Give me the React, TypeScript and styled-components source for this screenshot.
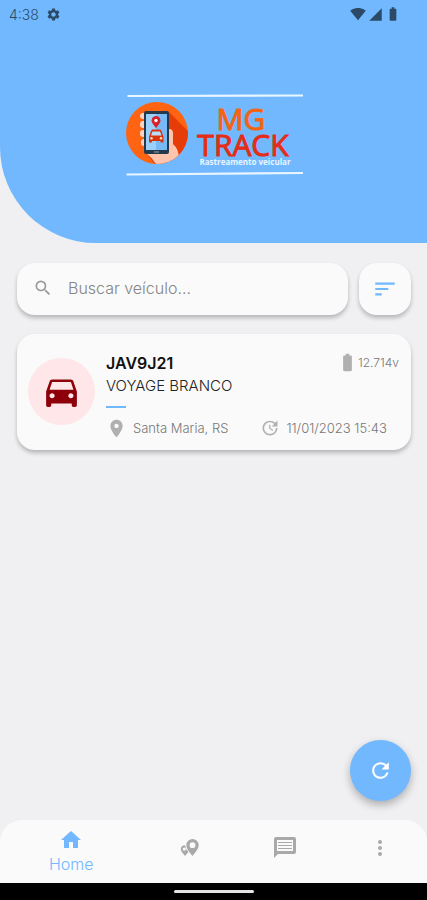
import React, { useState } from "react";
import styled, { createGlobalStyle } from "styled-components";
import {
  MdBatteryFull,
  MdDirectionsCar,
  MdHome,
  MdMoreVert,
  MdPlace,
  MdRefresh,
  MdSearch,
  MdSettings,
  MdSignalCellular4Bar,
  MdSignalWifi4Bar,
  MdSort,
  MdUpdate,
} from "react-icons/md";

const color = {
  primary: "#71b8ff",
  page: "#f0f0f3",
  surface: "#fafafa",
  icon: "#b0b0b0",
  status: "#2b4a68",
};

const GlobalStyle = createGlobalStyle`
  *, *::before, *::after { box-sizing: border-box; }
  body {
    margin: 0;
    background: ${color.page};
    font-family: Inter, "Open Sans", sans-serif;
  }
  button, input { font: inherit; }
`;

const Screen = styled.div`
  min-height: 100vh;
  display: flex;
  flex-direction: column;
`;

const Header = styled.header`
  height: 243px;
  background: ${color.primary};
  border-bottom-left-radius: 96px;
  display: flex;
  flex-direction: column;
`;

const StatusBar = styled.div`
  height: 28px;
  padding: 0 26px 0 9px;
  display: flex;
  align-items: center;
  justify-content: space-between;
  color: ${color.status};
  font-size: 14px;
  font-weight: 300;
`;

const StatusGroup = styled.div<{ $gap: number }>`
  display: flex;
  align-items: center;
  gap: ${(p) => p.$gap}px;
`;

const LogoArea = styled.div`
  padding-top: 64px;
  display: flex;
  justify-content: center;
`;

const Main = styled.main`
  flex: 1;
  display: flex;
  flex-direction: column;
  padding: 20px 16px 19px 17px;
`;

const SearchRow = styled.form`
  display: flex;
  gap: 11px;
`;

const raised = "0 3px 4px rgba(0, 0, 0, 0.24)";

const SearchField = styled.label`
  flex: 1;
  min-width: 0;
  height: 52px;
  padding: 0 16px 2px;
  display: flex;
  align-items: center;
  gap: 15px;
  border-radius: 18px;
  background: ${color.surface};
  box-shadow: ${raised};
  color: #9a9a9a;
  svg { flex: none; }
`;

const SearchInput = styled.input`
  flex: 1;
  min-width: 0;
  padding: 0;
  border: 0;
  outline: 0;
  background: transparent;
  color: #333;
  font-size: 16px;
  font-weight: 300;
  &::placeholder { color: #858585; opacity: 1; }
`;

const SortButton = styled.button`
  width: 52px;
  height: 52px;
  padding: 0;
  display: grid;
  place-items: center;
  border: 0;
  border-radius: 18px;
  background: ${color.surface};
  box-shadow: ${raised};
  color: ${color.primary};
`;

const Card = styled.article`
  margin-top: 19px;
  min-height: 116px;
  padding: 18px 12px 10px 11px;
  display: flex;
  gap: 11px;
  border-radius: 18px;
  background: ${color.surface};
  box-shadow: ${raised};
`;

const Avatar = styled.div`
  flex: none;
  width: 67px;
  height: 67px;
  margin-top: 6px;
  display: grid;
  place-items: center;
  border-radius: 50%;
  background: #ffe6e8;
  color: #8e0009;
`;

const CardBody = styled.div`
  flex: 1;
  min-width: 0;
`;

const TitleRow = styled.div`
  display: flex;
  align-items: center;
  justify-content: space-between;
`;

const Plate = styled.h2`
  margin: 0;
  font-size: 16px;
  line-height: 20px;
  font-weight: 600;
  color: #111;
`;

const Model = styled.p`
  margin: 3px 0 0;
  font-size: 15px;
  line-height: 20px;
  font-weight: 300;
  color: #222;
`;

const Accent = styled.div`
  width: 20px;
  height: 2px;
  margin-top: 10px;
  background: ${color.primary};
`;

const Voltage = styled.span`
  display: flex;
  align-items: center;
  font-size: 12px;
  font-weight: 300;
  color: #777;
  svg { color: ${color.icon}; }
`;

const MetaRow = styled.div`
  margin-top: 10px;
  display: flex;
  gap: 32px;
`;

const Meta = styled.span`
  display: flex;
  align-items: center;
  gap: 6px;
  height: 20px;
  font-size: 13px;
  font-weight: 300;
  white-space: nowrap;
  color: #777;
  svg { flex: none; color: ${color.icon}; }
`;

const RefreshButton = styled.button`
  width: 61px;
  height: 61px;
  margin-top: auto;
  align-self: flex-end;
  padding: 0;
  display: grid;
  place-items: center;
  border: 0;
  border-radius: 50%;
  background: ${color.primary};
  box-shadow: 0 4px 8px rgba(0, 0, 0, 0.28);
  color: #fff;
`;

const NavBar = styled.nav`
  height: 63px;
  display: grid;
  grid-template-columns: 3fr 2fr 2fr 2fr;
  border-radius: 22px 22px 0 0;
  background: ${color.surface};
`;

const NavItem = styled.button<{ $active?: boolean }>`
  padding: 0 0 ${(p) => (p.$active ? 2 : 8)}px;
  display: flex;
  flex-direction: column;
  align-items: center;
  justify-content: center;
  gap: 2px;
  border: 0;
  background: transparent;
  color: ${(p) => (p.$active ? color.primary : "#a9a9a9")};
  font-size: 16px;
  line-height: 20px;
  font-weight: 300;
`;

const GestureBar = styled.div`
  height: 17px;
  display: flex;
  justify-content: center;
  align-items: center;
  background: #000;
`;

const GesturePill = styled.div`
  width: 80px;
  height: 3px;
  border-radius: 2px;
  background: #e4e4e4;
`;

function Logo() {
  return (
    <svg width="180" height="86" viewBox="0 0 180 86" role="img" aria-label="MG Track, rastreamento veicular">
      <defs>
        <clipPath id="disc">
          <circle cx="33" cy="41" r="31" />
        </clipPath>
      </defs>
      <path d="M3.500 4L179 3.500" stroke="#e9f5ff" strokeWidth="2.200" />
      <path d="M2.500 82.500L179 81" stroke="#e9f5ff" strokeWidth="2.200" />
      <g clipPath="url(#disc)">
        <rect width="68" height="76" fill="#ff6412" />
        <path d="M45 20L68 43V76H34L22 61Z" fill="#e63c08" />
        <path d="M22 60H44V37Q50 36 49 44V52Q55 57 55 67V76H34Q30 67 22 61Z" fill="#ffc4ae" />
        <g fill="#ffd3c4">
          <rect x="16" y="21" width="9" height="6" rx="3" />
          <rect x="16" y="29" width="9" height="7" rx="3" />
          <rect x="16" y="38" width="9" height="7" rx="3" />
          <rect x="17" y="47" width="9" height="7" rx="3" />
        </g>
        <rect x="20" y="19" width="25" height="43" rx="2" fill="#26394b" />
        <rect x="22" y="22" width="21" height="36" fill="#78baf5" />
        <path d="M22 22H32V58H22Z" fill="#9bd0fa" />
        <path d="M30 60H35" stroke="#8ba5b8" />
        <path d="M32 35.500C29.500 32 28 30.500 28 28.500A4 4 0 0 1 36 28.500C36 30.500 34.500 32 32 35.500Z" fill="#d92027" stroke="#d92027" />
        <circle cx="32" cy="28.500" r="1.700" fill="#fff" />
        <path d="M25 45L27 39Q27.500 37.500 28.500 37.500H36Q37 37.500 37.500 39L39.500 45V50.500H36.500V49H28V50.500H25Z" fill="#d9340e" />
        <path d="M28.500 39.500H36L37.500 43.500H27Z" fill="#b9defa" />
        <circle cx="27.500" cy="46.300" r="1.200" fill="#ffe4c4" />
        <circle cx="37" cy="46.300" r="1.200" fill="#ffe4c4" />
      </g>
      <g fontFamily="Open Sans, Noto Sans, sans-serif" fontSize="30" fontWeight="400" strokeWidth="1">
        <text x="117" y="38" textAnchor="middle" fill="#f26414" stroke="#f26414">MG</text>
        <text x="119" y="64" textAnchor="middle" fill="#e42c16" stroke="#e42c16">TRACK</text>
      </g>
      <text x="121" y="73" textAnchor="middle" fontFamily="Open Sans, sans-serif" fontSize="8" fontWeight="700" fill="#e9f5ff">
        Rastreamento veicular
      </text>
    </svg>
  );
}

function PinsIcon() {
  return (
    <svg width="20" height="20" viewBox="0 0 20 20" aria-hidden="true" fill="currentColor" fillRule="evenodd">
      <path d="M12.500 1A6.200 6.200 0 0 1 18.700 7.200C18.700 10.500 15.500 14 12.500 18C9.500 14 6.300 10.500 6.300 7.200A6.200 6.200 0 0 1 12.500 1ZM12.500 4.300A2.900 2.900 0 1 0 12.500 10.100A2.900 2.900 0 1 0 12.500 4.300Z" />
      <path d="M5 7.200Q5.500 11 8.500 14L5 18C3 15 .8 13.500 .8 11.200A4.200 4.200 0 0 1 5 7.200ZM4.300 9.500A1.600 1.600 0 1 0 4.300 12.700A1.600 1.600 0 1 0 4.300 9.500Z" />
    </svg>
  );
}

function MessageIcon() {
  return (
    <svg width="22" height="22" viewBox="0 0 22 22" aria-hidden="true">
      <path fill="currentColor" fillRule="evenodd" d="M2 0H20Q22 0 22 2V15Q22 17 20 17H4L0 21V2Q0 0 2 0ZM3 3V14H19V3Z" />
      <path stroke="currentColor" d="M4 5.500H18M4 8.500H18M4 11.500H18" />
    </svg>
  );
}

export default function App() {
  const [query, setQuery] = useState("");

  return (
    <>
      <GlobalStyle />
      <Screen>
        <Header>
          <StatusBar>
            <StatusGroup $gap={7}>
              <span>4:38</span>
              <MdSettings size={15} />
            </StatusGroup>
            <StatusGroup $gap={2}>
              <MdSignalWifi4Bar size={16} />
              <MdSignalCellular4Bar size={15} />
              <MdBatteryFull size={16} />
            </StatusGroup>
          </StatusBar>
          <LogoArea>
            <Logo />
          </LogoArea>
        </Header>
        <Main>
          <SearchRow onSubmit={(e) => e.preventDefault()}>
            <SearchField>
              <MdSearch size={20} />
              <SearchInput
                type="text"
                aria-label="Buscar veículo"
                placeholder="Buscar veículo..."
                value={query}
                onChange={(e) => setQuery(e.target.value)}
              />
            </SearchField>
            <SortButton type="button" aria-label="Ordenar">
              <MdSort size={26} />
            </SortButton>
          </SearchRow>
          <Card>
            <Avatar>
              <MdDirectionsCar size={41} />
            </Avatar>
            <CardBody>
              <TitleRow>
                <Plate>JAV9J21</Plate>
                <Voltage>
                  <MdBatteryFull size={21} />
                  12.714v
                </Voltage>
              </TitleRow>
              <Model>VOYAGE BRANCO</Model>
              <Accent />
              <MetaRow>
                <Meta>
                  <MdPlace size={21} />
                  Santa Maria, RS
                </Meta>
                <Meta>
                  <MdUpdate size={20} />
                  11/01/2023 15:43
                </Meta>
              </MetaRow>
            </CardBody>
          </Card>
          <RefreshButton type="button" aria-label="Atualizar">
            <MdRefresh size={25} />
          </RefreshButton>
        </Main>
        <NavBar>
          <NavItem type="button" $active>
            <MdHome size={24} />
            <span>Home</span>
          </NavItem>
          <NavItem type="button" aria-label="Mapa">
            <PinsIcon />
          </NavItem>
          <NavItem type="button" aria-label="Mensagens">
            <MessageIcon />
          </NavItem>
          <NavItem type="button" aria-label="Mais opções">
            <MdMoreVert size={24} />
          </NavItem>
        </NavBar>
        <GestureBar>
          <GesturePill />
        </GestureBar>
      </Screen>
    </>
  );
}
